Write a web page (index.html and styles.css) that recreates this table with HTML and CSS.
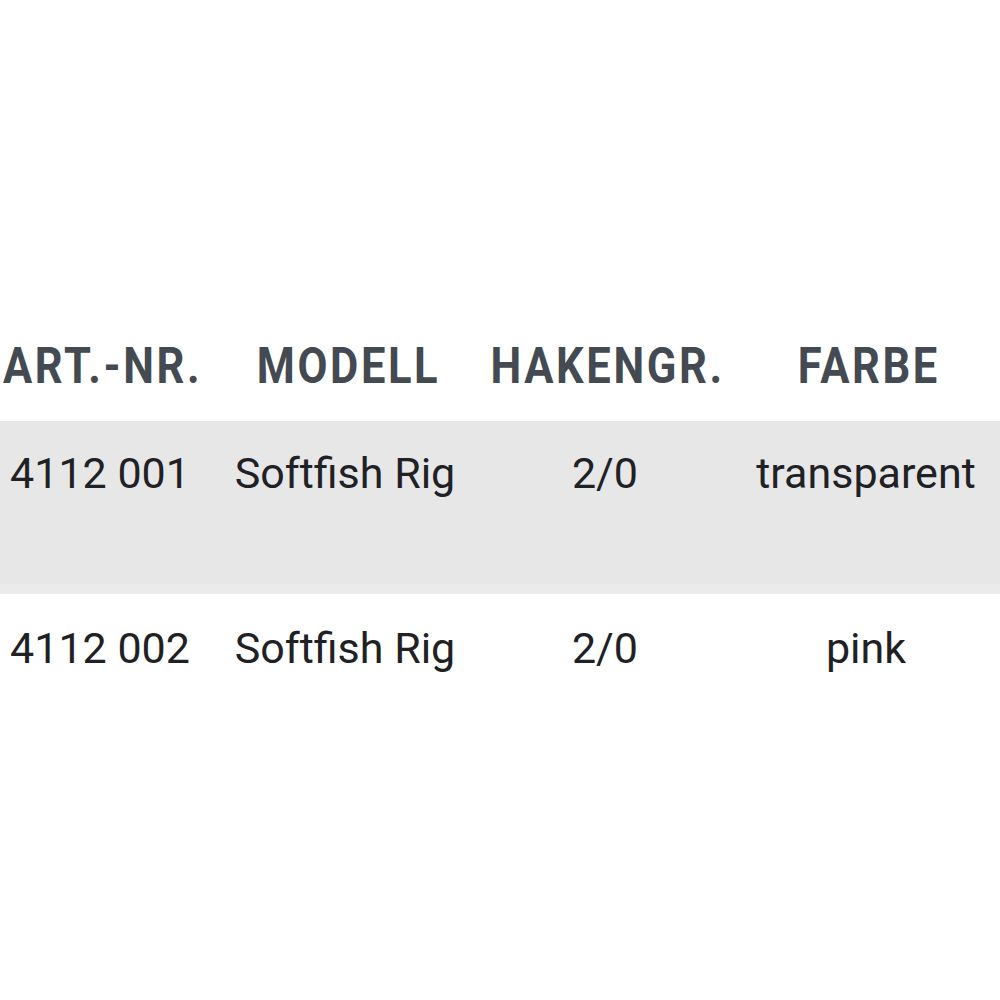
FILE: index.html
```html
<!DOCTYPE html>
<html lang="de">
<head>
<meta charset="utf-8">
<link rel="stylesheet" href="styles.css">
</head>
<body>
<div class="table">
  <div class="row head">
    <div class="cell"><span class="hd">ART.-NR.</span></div>
    <div class="cell"><span class="hd">MODELL</span></div>
    <div class="cell"><span class="hd">HAKENGR.</span></div>
    <div class="cell"><span class="hd">FARBE</span></div>
  </div>
  <div class="row odd">
    <div class="cell">4112 001</div>
    <div class="cell">Softfish Rig</div>
    <div class="cell">2/0</div>
    <div class="cell">transparent</div>
  </div>
  <div class="row even">
    <div class="cell">4112 002</div>
    <div class="cell">Softfish Rig</div>
    <div class="cell">2/0</div>
    <div class="cell">pink</div>
  </div>
</div>
</body>
</html>
```
FILE: styles.css
```css
html, body {
  margin: 0;
  padding: 0;
  background: #ffffff;
  overflow: hidden;
}
body {
  width: 1000px;
  height: 1000px;
  font-family: Roboto, "Liberation Sans", sans-serif;
}
.table {
  width: 1012px;
  padding-top: 326px;
}
.row {
  display: grid;
  grid-template-columns: 200px 290px 230px 292px;
  color: #202124;
  font-size: 43px;
  line-height: 50px;
  height: 173px;
  padding-top: 27px;
  box-sizing: border-box;
}
.row.head {
  height: 95px;
  padding-top: 15px;
  padding-left: 3px;
}
.row.odd {
  background: #e7e7e7;
  border-bottom: 10px solid #ebebeb;
}
.row.even {
  padding-top: 29px;
}
.cell {
  display: flex;
  justify-content: center;
  white-space: nowrap;
}
.hd {
  display: inline-block;
  font-weight: 700;
  font-size: 50px;
  letter-spacing: 3px;
  color: #434a52;
  transform: scaleX(0.87);
}
```
